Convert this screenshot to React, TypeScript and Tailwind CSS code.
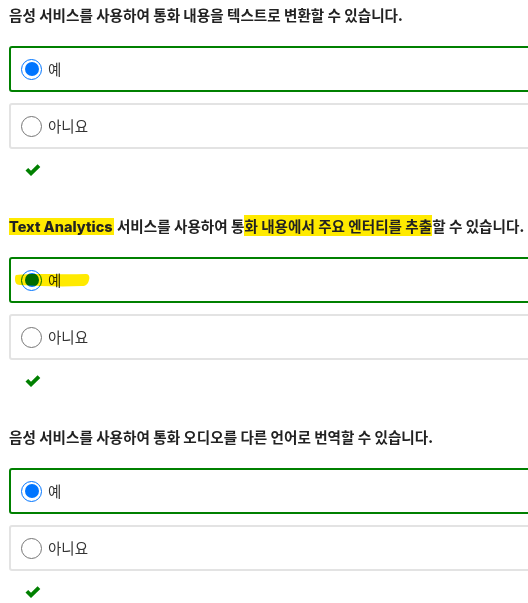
import React from 'react';

type Question = {
  text: React.ReactNode;
  marked?: boolean;
};

const KR = "font-['Noto_Sans_CJK_KR','Noto_Sans',sans-serif]";

function Radio({ checked }: { checked: boolean }) {
  if (checked) {
    return (
      <span className="flex h-[21px] w-[21px] shrink-0 items-center justify-center rounded-full border-[1.5px] border-[#0075ff] bg-white">
        <span className="h-[14px] w-[14px] rounded-full bg-[#0075ff]" />
      </span>
    );
  }
  return <span className="h-[21px] w-[21px] shrink-0 rounded-full border border-[#767676] bg-white" />;
}

function Option({ label, checked, marked }: { label: string; checked: boolean; marked?: boolean }) {
  return (
    <div
      className={`relative flex h-[46px] w-[540px] items-center gap-[6px] rounded-[3px] border-2 pl-[10px] ${
        checked ? 'border-[#008000]' : 'border-[#e3e3e3]'
      }`}
    >
      <Radio checked={checked} />
      <span className={`${KR} text-[14.5px] text-[#333]`}>{label}</span>
      {marked && (
        <svg
          className="pointer-events-none absolute left-[3px] top-[12px] mix-blend-multiply"
          width="76"
          height="18"
          viewBox="0 0 76 18"
        >
          <path
            d="M2 4 C20 2 45 4 72 3 C75 3 76 6 75 9 C74 13 72 15 68 15 C45 16 25 15 6 14 C2 14 1 11 1 8 C1 6 1 5 2 4 Z"
            fill="#ffea00"
          />
        </svg>
      )}
    </div>
  );
}

function Check() {
  return (
    <svg width="16" height="13" viewBox="0 0 16 13" className="ml-[16px]">
      <path d="M0.5 6.6 L3.2 3.9 L6 6.7 L12.6 0.2 L15.3 2.9 L6 12.1 Z" fill="#008000" />
    </svg>
  );
}

function Block({ q }: { q: Question }) {
  return (
    <div className="flex flex-col">
      <p className={`${KR} h-[20px] text-[14.6px] leading-[20px] font-bold whitespace-nowrap text-[#222]`}>{q.text}</p>
      <div className="mt-[21px] flex flex-col gap-[11px]">
        <Option label="예" checked marked={q.marked} />
        <Option label="아니요" checked={false} />
      </div>
      <div className="mt-[15px] h-[13px]">
        <Check />
      </div>
    </div>
  );
}

const questions: Question[] = [
  { text: '음성 서비스를 사용하여 통화 내용을 텍스트로 변환할 수 있습니다.' },
  {
    text: (
      <>
        <span className="bg-[#ffea00] pr-[1px] font-['Inter',sans-serif] text-[14.5px] font-extrabold">Text Analytics</span> 서비스를 사용하여 통
        <span className="bg-[#ffea00]">화 내용에서 주요 엔터티를 추출</span>할 수 있습니다.
      </>
    ),
    marked: true,
  },
  { text: '음성 서비스를 사용하여 통화 오디오를 다른 언어로 번역할 수 있습니다.' },
];

export default function App() {
  return (
    <div className="h-[603px] w-[528px] overflow-hidden bg-white">
      <div className="flex flex-col gap-[39px] pl-[9px] pt-[5px]">
        {questions.map((q, i) => (
          <Block key={i} q={q} />
        ))}
      </div>
    </div>
  );
}
